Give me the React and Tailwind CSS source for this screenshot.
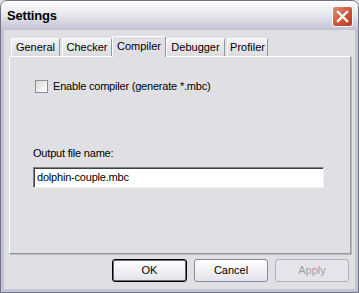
export default function App() {
  const font = { fontFamily: '"Liberation Sans", Arial, sans-serif' };
  const tabs = [
    { t: "General", w: "w-[49px]", ml: "ml-0" },
    { t: "Checker", w: "w-[50px]", ml: "ml-[2px]" },
    { t: "Compiler", w: "w-[54px]", ml: "ml-0", sel: true },
    { t: "Debugger", w: "w-[59px]", ml: "ml-0" },
    { t: "Profiler", w: "w-[41px]", ml: "ml-[2px]" },
  ];
  return (
    <div className="w-[359px] h-[293px] bg-[#e0dfe3] flex flex-col" style={font}>
      <div className="flex flex-col w-full h-full rounded-t-[7px] border border-[#72728c] overflow-hidden">
        <div className="h-[29px] shrink-0 flex items-center justify-between pl-[6px] pr-[5px] bg-gradient-to-b from-[#fdfdfe] via-[#e6e6ee] to-[#c2c2d2]">
          <span className="text-[13px] font-bold text-black tracking-[-0.2px] mt-[1px]">Settings</span>
          <div className="w-[21px] h-[21px] rounded-[3px] border border-white bg-gradient-to-br from-[#e88b78] via-[#d4563c] to-[#b83a22] flex items-center justify-center mt-[1px]">
            <svg width="13" height="13" viewBox="0 0 13 13">
              <path d="M2 2 L11 11 M11 2 L2 11" stroke="white" strokeWidth="2.4" strokeLinecap="square" />
            </svg>
          </div>
        </div>
        <div className="flex-1 flex flex-col border-x-[3px] border-b-[3px] border-[#c4c4d4] bg-[#e0dfe3] pl-[5px] pr-[4px]">
          <div className="flex items-end h-[26px] pl-[2px] shrink-0">
            {tabs.map(({ t, w, ml, sel }) => (
              <div
                key={t}
                className={
                  sel
                    ? `${w} ${ml} h-[21px] -mb-[1px] border-x border-t border-white border-r-[#919b9c] bg-[#e0dfe3] text-[11px] leading-[18px] text-center text-black relative z-10 rounded-t-[2px]`
                    : `${w} ${ml} h-[18px] border-x border-t border-white border-r-[#919b9c] bg-gradient-to-b from-[#f2f2f4] to-[#dcdce0] text-[11px] leading-[17px] text-center text-black rounded-t-[2px]`
                }
              >
                {t}
              </div>
            ))}
          </div>
          <div className="h-[198px] shrink-0 border border-white border-r-[#919b9c] border-b-[#919b9c] bg-[#e0dfe3] shadow-[1px_1px_0_#b8b8c0]">
            <div className="flex items-center h-[13px] mt-[23px] ml-[25px] gap-[5px]">
              <div className="w-[13px] h-[13px] border border-[#8d8d9a] bg-gradient-to-br from-[#dcdcd7] to-[#ffffff]" />
              <span className="text-[11px] leading-[13px] text-black tracking-[-0.2px]">Enable compiler (generate *.mbc)</span>
            </div>
            <div className="ml-[23px] mt-[54px] h-[13px] text-[11px] leading-[13px] text-black tracking-[-0.2px]">Output file name:</div>
            <div className="ml-[23px] mt-[7px] w-[291px] h-[21px] border border-[#7f7f7f] border-r-[#f0f0ea] border-b-[#f0f0ea] shadow-[inset_1px_1px_0_#404040] bg-white flex items-center pl-[3px] text-[11px] text-black tracking-[-0.2px]">
              dolphin-couple.mbc
            </div>
          </div>
          <div className="flex justify-end gap-[7px] mt-[5px] pr-[2px]">
            <button className="w-[75px] h-[23px] rounded-[3px] border border-black shadow-[inset_0_0_0_1px_#6a6a7a] bg-gradient-to-b from-[#ffffff] to-[#e2e2ea] text-[11px] text-black">OK</button>
            <button className="w-[74px] h-[23px] rounded-[3px] border border-[#8a8aa0] bg-gradient-to-b from-[#ffffff] to-[#e2e2ea] text-[11px] text-black">Cancel</button>
            <button className="w-[74px] h-[23px] rounded-[3px] border border-[#b0b0c0] bg-[#e4e4ea] text-[11px] text-[#a0a0a8]">Apply</button>
          </div>
        </div>
      </div>
    </div>
  );
}
